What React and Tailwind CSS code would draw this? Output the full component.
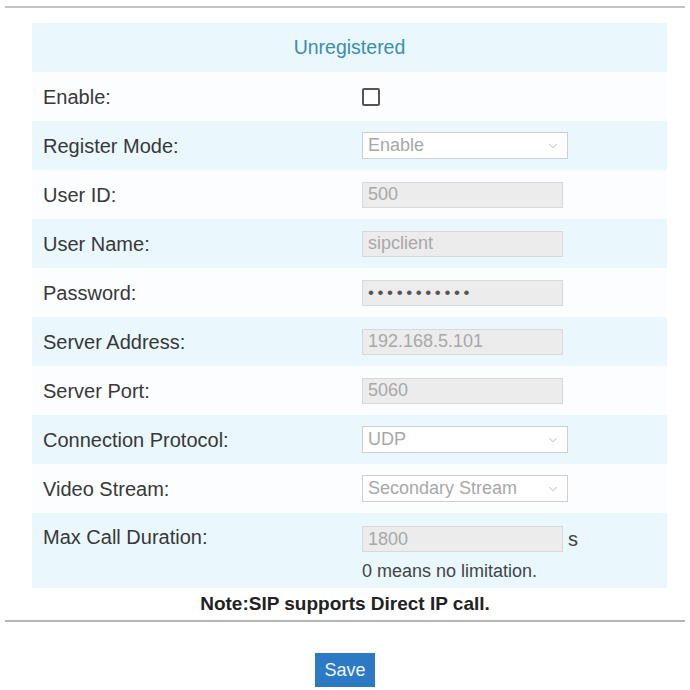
import React from 'react';
import { ChevronDown } from 'lucide-react';

const rows = [
  { label: 'Enable:', kind: 'check' },
  { label: 'Register Mode:', kind: 'select', value: 'Enable' },
  { label: 'User ID:', kind: 'input', value: '500' },
  { label: 'User Name:', kind: 'input', value: 'sipclient' },
  { label: 'Password:', kind: 'password' },
  { label: 'Server Address:', kind: 'input', value: '192.168.5.101' },
  { label: 'Server Port:', kind: 'input', value: '5060' },
  { label: 'Connection Protocol:', kind: 'select', value: 'UDP' },
  { label: 'Video Stream:', kind: 'select', value: 'Secondary Stream' },
];

function Field({ row }) {
  if (row.kind === 'check') {
    return <div className="w-[18px] h-[18px] border-2 border-[#555] rounded-[2px] bg-white" />;
  }
  if (row.kind === 'select') {
    return (
      <div className="w-[206px] h-[27px] bg-white border border-[#cfcfcf] flex items-center justify-between pl-[5px] pr-[7px]">
        <span className="text-[18px] text-[#a8a8a8]">{row.value}</span>
        <ChevronDown size={14} strokeWidth={1.5} color="#b0b0b0" />
      </div>
    );
  }
  if (row.kind === 'password') {
    return (
      <div className="w-[201px] h-[26px] bg-[#ececec] border border-[#d8d8d8] flex items-center pl-[5px]">
        <span className="text-[17px] text-[#555] tracking-[3.6px] leading-none">•••••••••••</span>
      </div>
    );
  }
  return (
    <div className="w-[201px] h-[26px] bg-[#ececec] border border-[#d8d8d8] flex items-center pl-[5px]">
      <span className="text-[18px] text-[#a8a8a8]">{row.value}</span>
    </div>
  );
}

export default function App() {
  return (
    <div className="w-[690px] h-[690px] bg-white overflow-hidden" style={{ fontFamily: '"Liberation Sans", Arial, sans-serif' }}>
      <div className="mx-[5px] mt-[6px] h-[2px] bg-[#c4c4c4]" />

      <div className="ml-[32px] mt-[15px] w-[635px]">
        <div className="h-[49px] bg-[#eaf7fd] flex items-center justify-center">
          <span className="text-[19.5px] text-[#3b8db3]">Unregistered</span>
        </div>

        {rows.map((row, i) => (
          <div
            key={row.label}
            className={`h-[49px] flex items-center ${i % 2 === 0 ? 'bg-[#fbfdfe]' : 'bg-[#eaf7fd]'}`}
          >
            <div className="w-[330px] pl-[11px] text-[20px] text-[#383838]">{row.label}</div>
            <Field row={row} />
          </div>
        ))}

        <div className="h-[75px] bg-[#eaf7fd] flex pt-[11px]">
          <div className="w-[330px] pl-[11px] text-[20px] text-[#383838] leading-[26px]">Max Call Duration:</div>
          <div className="flex flex-col">
            <div className="flex items-center">
              <div className="w-[201px] h-[26px] bg-[#ececec] border border-[#d8d8d8] flex items-center pl-[5px]">
                <span className="text-[18px] text-[#a8a8a8]">1800</span>
              </div>
              <span className="ml-[5px] text-[20px] text-[#444]">s</span>
            </div>
            <span className="mt-[6px] text-[18px] text-[#444] leading-[22px]">0 means no limitation.</span>
          </div>
        </div>
      </div>

      <div className="h-[32px] flex items-center justify-center">
        <span className="text-[19px] font-bold text-[#222]">Note:SIP supports Direct IP call.</span>
      </div>

      <div className="mx-[5px] h-[2px] bg-[#b5b5b5]" />

      <div className="flex justify-center mt-[31px]">
        <button className="w-[60px] h-[34px] bg-[#2d7ac4] text-[#eef4fb] text-[18px]">Save</button>
      </div>
    </div>
  );
}
